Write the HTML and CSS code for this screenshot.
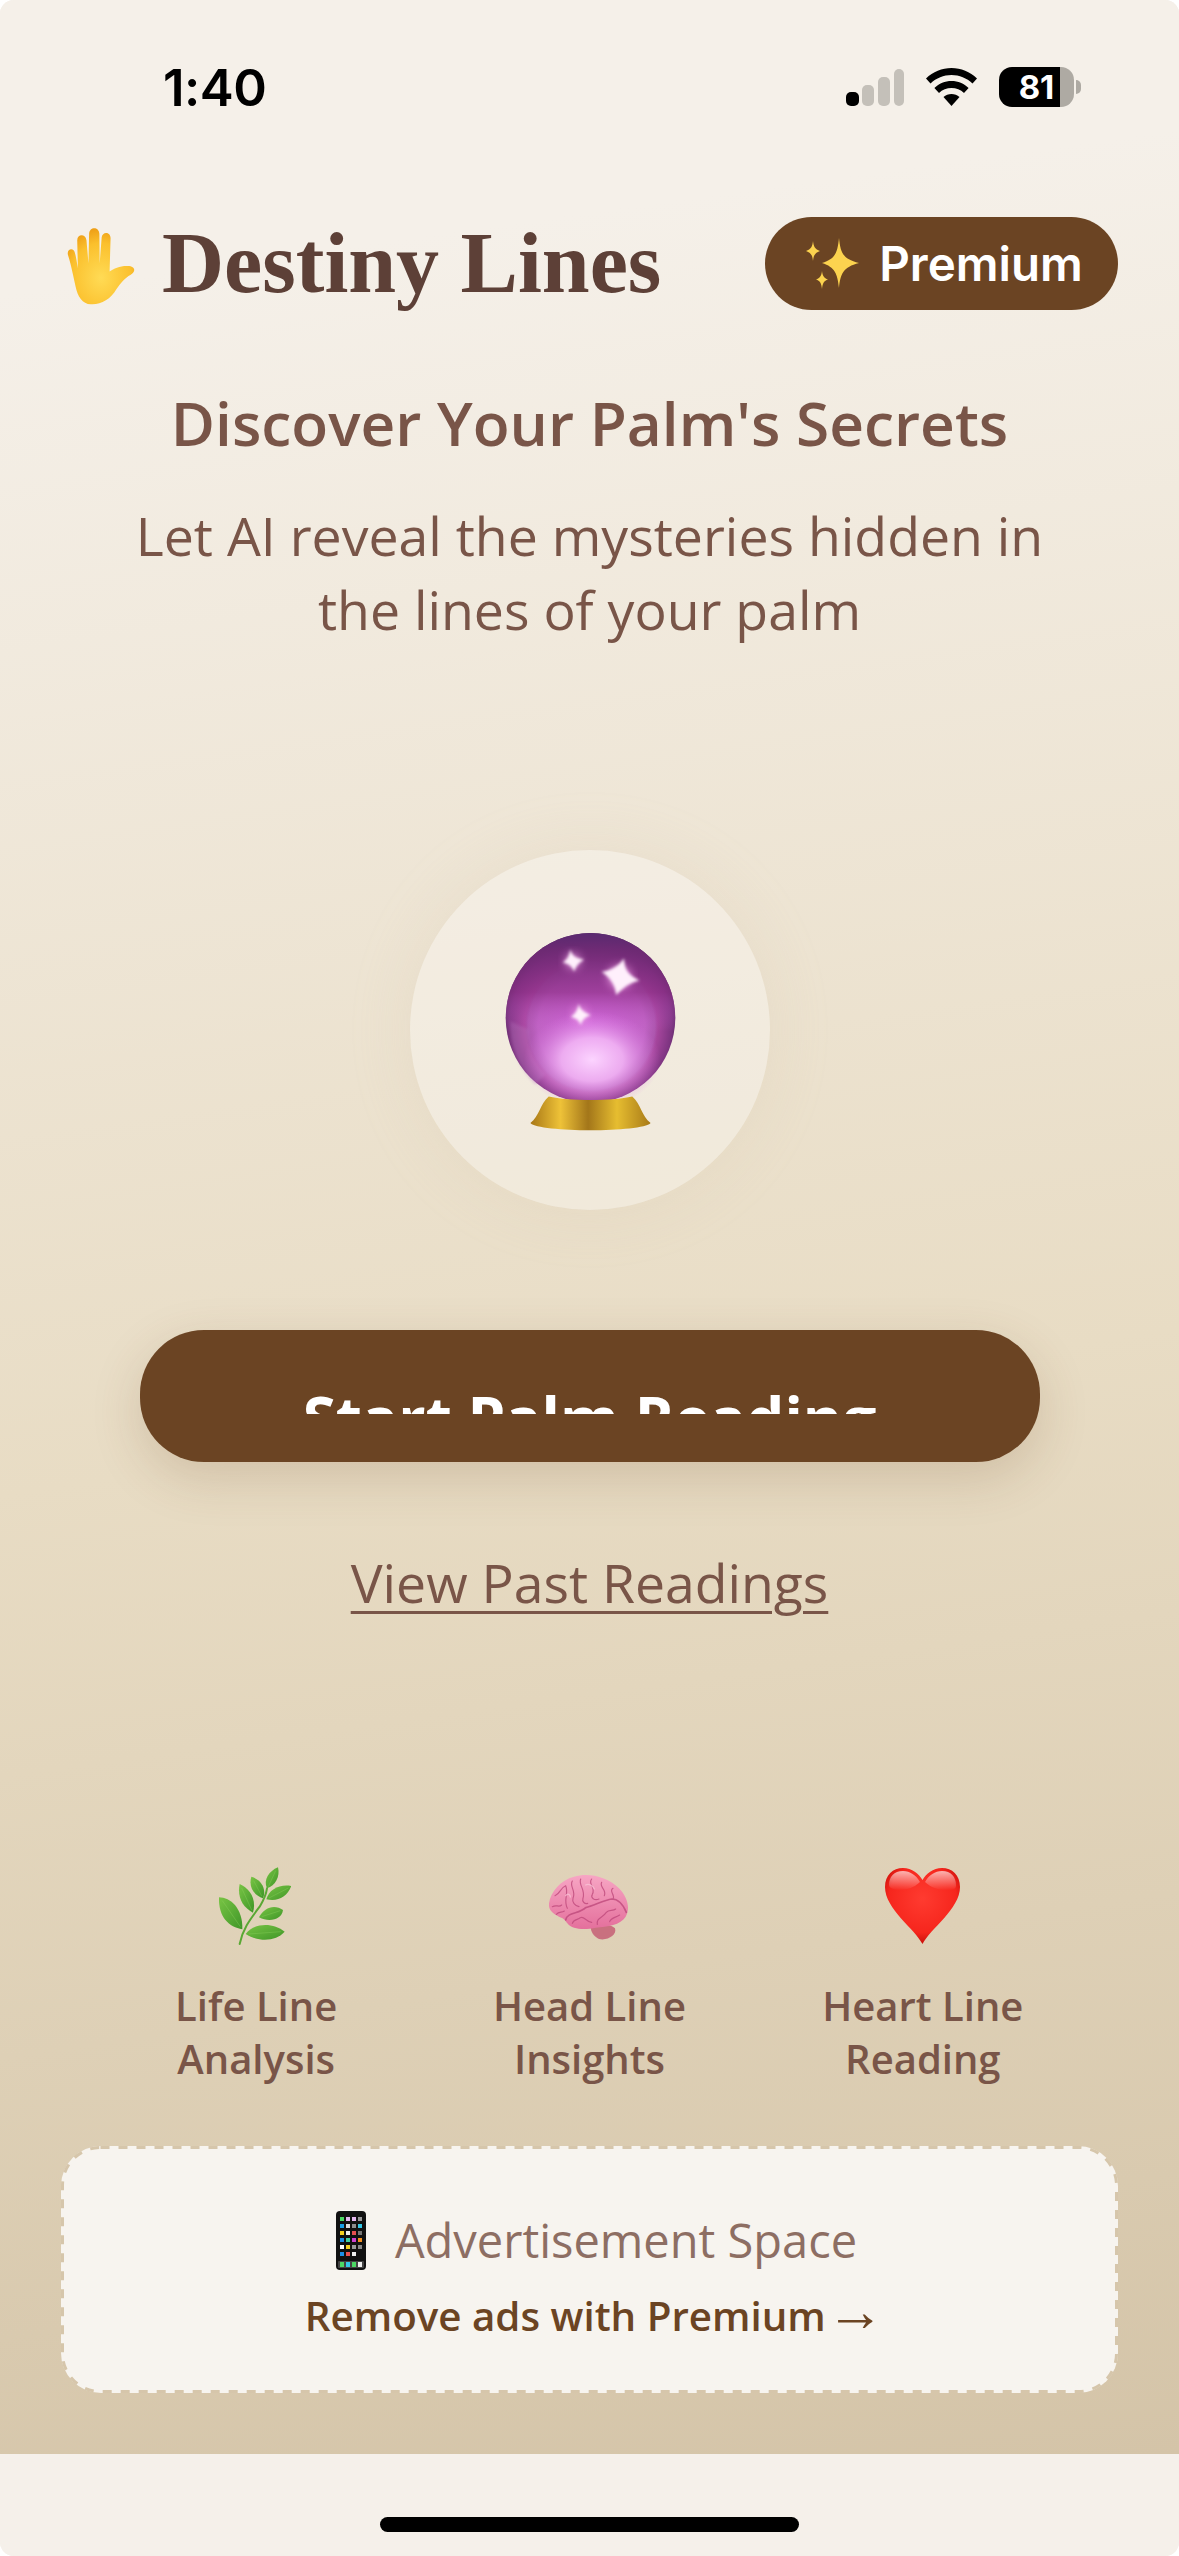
FILE: index.html
```html
<!DOCTYPE html>
<html lang="en">
<head>
<meta charset="utf-8">
<title>Destiny Lines</title>
<link rel="stylesheet" href="styles.css">
</head>
<body>
<div class="screen">
  <div class="status">
    <span class="time">1:40</span>
    <div class="status-icons">
      <svg class="signal" viewBox="0 0 58 37"><rect x="0" y="23" width="13" height="14" rx="5" fill="#000"/><rect x="16" y="16" width="12" height="21" rx="5" fill="#c4c0b9"/><rect x="32" y="8" width="12" height="29" rx="5" fill="#c4c0b9"/><rect x="48" y="0" width="10" height="37" rx="5" fill="#c4c0b9"/></svg>
      <svg class="wifi" viewBox="0 0 51 38"><path d="M25.5 0C35 0 44 3.8 51 10.5L46.5 15.5C40.7 10 33.3 7 25.5 7S10.3 10 4.500 15.500L0 10.500C7 3.800 16 0 25.500 0Z" fill="#000"/><path d="M25.500 13C32 13 38 15.500 42.600 20L38 25C34.700 21.800 30.200 20 25.500 20S16.300 21.800 13 25L8.400 20C13 15.500 19 13 25.500 13Z" fill="#000"/><path d="M25.500 26C28.500 26 31.300 27.100 33.500 29.100L25.500 38L17.500 29.100C19.700 27.100 22.500 26 25.500 26Z" fill="#000"/></svg>
      <div class="battery"><span>81</span></div>
    </div>
  </div>

  <main class="main">
    <header class="top">
      <div class="brand">
        <svg class="hand" viewBox="75 78 212 240">
          <defs><radialGradient id="handFill" cx="50%" cy="65%" r="65%"><stop offset="0" stop-color="#ffdb55"/><stop offset=".7" stop-color="#fbc02d"/><stop offset="1" stop-color="#ee9f16"/></radialGradient></defs>
          <path d="M104 260C98 235 92 200 81 165C77 150 90 143 98 150C103 155 106 175 111 205L109 120C109 100 135 100 137 120L143 190L145 100C146 78 175 78 176 100L177 190L183 112C185 92 211 94 210 115L207 215C220 205 240 197 262 198C285 198 288 215 270 225C255 233 240 250 228 268C210 300 180 316 150 314C125 313 110 290 104 260Z" fill="url(#handFill)"/>
        </svg>
        <h1 class="title">Destiny Lines</h1>
      </div>
      <div class="premium">
        <svg class="sparkles" viewBox="0 0 54 52">
          <path d="M34 0C35.500 15 38 21 54 25C38 29 35.500 36 34 50C32.500 36 30 29 17 25C30 21 32.500 15 34 0Z" fill="#fcd34f"/>
          <path d="M8 3C8.600 9 10 11 15 13C10 15 8.600 17 8 23C7.400 17 6 15 1 13C6 11 7.400 9 8 3Z" fill="#fcd34f"/>
          <path d="M17 33C17.600 38 19 40 23 41.500C19 43 17.600 45 17 51C16.400 45 15 43 11 41.500C15 40 16.400 38 17 33Z" fill="#fcd34f"/>
        </svg>
        <span>Premium</span>
      </div>
    </header>

    <h2 class="headline">Discover Your Palm's Secrets</h2>
    <p class="sub">Let AI reveal the mysteries hidden in<br>the lines of your palm</p>

    <div class="orb-circle">
      <svg class="orb" viewBox="370 330 530 605">
        <defs>
          <radialGradient id="orbBase" cx="50%" cy="55%" r="52%"><stop offset="0" stop-color="#c65ccb"/><stop offset=".75" stop-color="#a9479f"/><stop offset=".92" stop-color="#7c3480"/><stop offset="1" stop-color="#54285f"/></radialGradient>
          <radialGradient id="orbLens" cx="50%" cy="50%" r="50%"><stop offset="0" stop-color="#d267da"/><stop offset=".8" stop-color="#c063c4"/><stop offset=".95" stop-color="#b060b8" stop-opacity=".6"/><stop offset="1" stop-color="#a050a8" stop-opacity="0"/></radialGradient>
          <linearGradient id="orbTop" x1="0" y1="0" x2="0" y2="1"><stop offset="0" stop-color="#5a2a70"/><stop offset=".1" stop-color="#6e2a74" stop-opacity=".95"/><stop offset=".35" stop-color="#8e2f88" stop-opacity=".7"/><stop offset=".58" stop-color="#c85fd0" stop-opacity="0"/></linearGradient>
          <radialGradient id="orbGlow" cx="50%" cy="50%" r="50%"><stop offset="0" stop-color="#fcd4ff"/><stop offset=".45" stop-color="#f4b8f7" stop-opacity=".85"/><stop offset="1" stop-color="#d878e0" stop-opacity="0"/></radialGradient>
          <linearGradient id="gold" x1="0" y1="0" x2="1" y2="0"><stop offset="0" stop-color="#a87716"/><stop offset=".25" stop-color="#eec238"/><stop offset=".48" stop-color="#a3761a"/><stop offset=".72" stop-color="#e6bd30"/><stop offset="1" stop-color="#a87a18"/></linearGradient>
          <filter id="soft"><feGaussianBlur stdDeviation="4"/></filter>
          <filter id="halo"><feGaussianBlur stdDeviation="14"/></filter>
        </defs>
        <circle cx="635" cy="590" r="254" fill="url(#orbBase)"/>
        <circle cx="638" cy="615" r="200" fill="url(#orbLens)"/>
        <path d="M450 625A190 190 0 0 0 500 760L470 790A250 250 0 0 1 395 600Z" fill="#b878c0" opacity=".35" filter="url(#soft)"/>
        <circle cx="635" cy="590" r="254" fill="url(#orbTop)"/>
        <ellipse cx="640" cy="715" rx="205" ry="145" fill="url(#orbGlow)"/>
        <g fill="#f8a8f0" filter="url(#halo)" opacity=".8">
          <circle cx="722" cy="468" r="34"/><circle cx="582" cy="420" r="22"/><circle cx="604" cy="580" r="20"/>
        </g>
        <g fill="#fff0fc" filter="url(#soft)">
          <path d="M735 412C738 445 745 460 782 478C750 486 735 498 712 522C708 490 695 470 668 452C698 448 718 435 735 412Z"/>
          <path d="M574 385C580 405 590 412 616 416C598 426 592 435 586 452C580 435 570 428 552 424C566 416 572 404 574 385Z"/>
          <path d="M600 548C604 565 612 572 636 582C618 588 610 595 606 612C600 596 592 590 576 588C590 578 596 568 600 548Z"/>
        </g>
        <path d="M455 905C482 885 484 848 510 826C570 840 700 840 760 826C786 848 788 885 815 905C790 934 480 934 455 905Z" fill="url(#gold)"/>
      </svg>
    </div>

    <button class="start"><span class="start-clip">Start Palm Reading</span></button>
    <a class="past">View Past Readings</a>

    <section class="features">
      <div class="feature">
        <svg class="ficon ficon-leaf" viewBox="25 21 220 234">
          <defs><linearGradient id="leaf" x1="0" y1="0" x2="1" y2="1"><stop offset="0" stop-color="#78c444"/><stop offset="1" stop-color="#3f9628"/></linearGradient></defs>
          <path d="M90 252C100 205 120 180 150 140C165 115 170 100 172 85" fill="none" stroke="#5aa834" stroke-width="6" stroke-linecap="round"/>
          <g fill="url(#leaf)">
            <path d="M28 112C62 112 100 145 98 208C58 202 26 172 28 112Z"/>
            <path d="M90 72C118 84 142 115 130 158C98 142 82 110 90 72Z"/>
            <path d="M125 50C153 58 172 85 160 115C132 105 116 80 125 50Z"/>
            <path d="M205 22C212 50 197 77 172 85C160 60 178 33 205 22Z"/>
            <path d="M245 78C232 112 205 125 170 118C178 88 210 72 245 78Z"/>
            <path d="M220 150C217 178 180 188 148 172C163 142 195 132 220 150Z"/>
            <path d="M225 215C200 243 150 248 108 222C133 187 192 187 225 215Z"/>
          </g>
          <g fill="none" stroke="#9ad86a" stroke-width="1.500" opacity=".6">
            <path d="M38 122L92 200M96 84L126 150M132 62L156 108M198 32L176 80M236 84L178 114M212 152L156 170M214 215L118 222"/>
          </g>
        </svg>
        <p class="flabel">Life Line<br>Analysis</p>
      </div>
      <div class="feature">
        <svg class="ficon" viewBox="40 6 245 234">
          <defs><linearGradient id="brain" x1="0" y1="0" x2="0" y2="1"><stop offset="0" stop-color="#f7a6c4"/><stop offset="1" stop-color="#e4709c"/></linearGradient></defs>
          <path d="M165 185C180 178 225 175 238 190C245 210 215 228 190 222C175 215 165 200 165 185Z" fill="#c9707f"/>
          <path d="M40 115C45 80 75 45 115 35C160 22 215 35 250 70C275 95 285 130 270 155C255 180 215 185 180 188C150 195 110 195 95 175C88 165 85 160 70 155C50 145 38 135 40 115Z" fill="url(#brain)"/>
          <g fill="none" stroke="#bf4a7c" stroke-width="3.500" stroke-linecap="round" stroke-linejoin="round" opacity=".8">
            <path d="M90 165C95 140 130 148 150 128C175 122 205 105 228 102C250 102 265 125 272 142" stroke-width="5"/>
            <path d="M58 92C75 85 72 70 90 62C100 85 82 105 95 130"/>
            <path d="M110 48C100 65 122 75 112 100C108 112 118 122 130 125"/>
            <path d="M135 42C128 62 150 72 142 100C138 110 148 118 156 115"/>
            <path d="M168 42C155 58 182 66 170 88C164 98 176 108 190 102"/>
            <path d="M198 52C190 68 214 72 206 92"/>
            <path d="M232 70C218 78 240 90 232 102"/>
            <path d="M50 125C62 118 70 128 78 120M62 148C70 138 78 144 86 138"/>
            <path d="M110 175C114 162 128 165 134 158C146 152 150 170 168 172M185 178C182 158 200 160 212 142C220 132 232 140 240 132M222 170C226 158 240 158 252 150"/>
          </g>
          <path d="M150 60C160 55 172 62 176 72M90 92C96 84 104 88 104 96" fill="none" stroke="#fbc8da" stroke-width="4" stroke-linecap="round" opacity=".7"/>
        </svg>
        <p class="flabel">Head Line<br>Insights</p>
      </div>
      <div class="feature">
        <svg class="ficon" viewBox="0 0 75 78">
          <defs>
            <radialGradient id="heart" cx="50%" cy="40%" r="60%"><stop offset="0" stop-color="#ff3b30"/><stop offset=".75" stop-color="#f6261d"/><stop offset="1" stop-color="#c80f0a"/></radialGradient>
            <linearGradient id="heartShine" x1="0" y1="0" x2="0" y2="1"><stop offset="0" stop-color="#fff" stop-opacity=".65"/><stop offset="1" stop-color="#fff" stop-opacity="0"/></linearGradient>
          </defs>
          <path d="M37.500 77C30 62 0 42 0 20C0 8 8 1 18 1C27 1 34 7 37.500 13C41 7 48 1 57 1C67 1 75 8 75 20C75 42 45 62 37.500 77Z" fill="url(#heart)"/>
          <path d="M18 4C9 4 4 10 4 18C4 22 12 24 22 22C28 21 33 17 35 15C31 8 25 4 18 4ZM57 4C50 4 44 8 40 15C46 21 56 24 66 23C71 22 71 20 71 18C71 10 66 4 57 4Z" fill="url(#heartShine)"/>
        </svg>
        <p class="flabel">Heart Line<br>Reading</p>
      </div>
    </section>

    <aside class="ad">
      <svg class="ad-dash" viewBox="0 0 1057 247" fill="none"><rect x="1.500" y="1.500" width="1054" height="244" rx="38" stroke="#d6c6ab" stroke-width="3" stroke-dasharray="9 9"/></svg>
      <div class="ad-line">
        <svg class="phone" viewBox="0 0 30 59">
          <rect width="30" height="59" rx="4" fill="#111"/>
          <g>
            <rect x="4" y="6" width="4" height="4" fill="#4cd964"/><rect x="10" y="6" width="4" height="4" fill="#e5b8f0"/><rect x="16" y="6" width="4" height="4" fill="#e5b8f0"/><rect x="22" y="6" width="4" height="4" fill="#999"/>
            <rect x="4" y="13" width="4" height="4" fill="#18a0e8"/><rect x="10" y="13" width="4" height="4" fill="#ddd"/><rect x="16" y="13" width="4" height="4" fill="#8e8e8e"/><rect x="22" y="13" width="4" height="4" fill="#33c8e8"/>
            <rect x="4" y="20" width="4" height="4" fill="#f5d020"/><rect x="10" y="20" width="4" height="4" fill="#eee"/><rect x="16" y="20" width="4" height="4" fill="#e85050"/><rect x="22" y="20" width="4" height="4" fill="#777"/>
            <rect x="4" y="27" width="4" height="4" fill="#1e90e8"/><rect x="10" y="27" width="4" height="4" fill="#40d0a0"/><rect x="16" y="27" width="4" height="4" fill="#d040d0"/><rect x="22" y="27" width="4" height="4" fill="#f59020"/>
            <rect x="4" y="34" width="4" height="4" fill="#fff"/><rect x="10" y="34" width="4" height="4" fill="#f5d020"/><rect x="16" y="34" width="4" height="4" fill="#999"/><rect x="22" y="34" width="4" height="4" fill="#888"/>
            <rect x="4" y="41" width="4" height="4" fill="#1e90e8"/><rect x="10" y="41" width="4" height="4" fill="#e85050"/><rect x="16" y="41" width="4" height="4" fill="#eee"/>
            <rect x="2" y="50" width="26" height="7" rx="1" fill="#444"/>
            <rect x="4" y="51" width="4" height="5" fill="#4cd964"/><rect x="10" y="51" width="4" height="5" fill="#33c8e8"/><rect x="16" y="51" width="4" height="5" fill="#4cd964"/><rect x="22" y="51" width="4" height="5" fill="#eee"/>
          </g>
        </svg>
        <span class="ad-text">Advertisement Space</span>
      </div>
      <div class="ad-remove">Remove ads with Premium <span class="arrow">→</span></div>
    </aside>
  </main>

  <div class="home"><div class="home-bar"></div></div>
</div>
</body>
</html>
```
FILE: styles.css
```css
* { box-sizing: border-box; }
html, body { margin: 0; padding: 0; background: #fff; }
body { width: 1179px; height: 2556px; overflow: hidden; font-family: "Open Sans", sans-serif; }

.screen {
  width: 1179px;
  height: 2556px;
  display: flex;
  flex-direction: column;
  background: #f5f0ea;
  border-radius: 14px;
  overflow: hidden;
}

/* status bar */
.status {
  height: 120px;
  flex: none;
  display: flex;
  justify-content: space-between;
  align-items: flex-start;
  padding: 60px 105px 0 163px;
  background: #f5f0e9;
}
.time { font: 600 51px/56px Inter, sans-serif; color: #000; letter-spacing: -0.5px; }
.status-icons { display: flex; align-items: center; gap: 22px; margin-top: 7px; }
.signal { width: 58px; height: 37px; display: block; }
.wifi { width: 51px; height: 38px; display: block; }
.battery {
  position: relative;
  width: 75px;
  height: 40px;
  border-radius: 13px;
  background: linear-gradient(90deg, #000 0 81%, #aeaaa3 81% 100%);
  display: flex;
  align-items: center;
  justify-content: center;
  color: #fff;
  font: 700 33px/40px Inter, sans-serif;
}
.battery::after {
  content: "";
  position: absolute;
  right: -7px;
  top: 13px;
  width: 5px;
  height: 14px;
  border-radius: 0 6px 6px 0;
  background: #aeaaa3;
}

/* main */
.main {
  flex: 1;
  display: flex;
  flex-direction: column;
  align-items: center;
  padding: 97px 61px 60px;
  background: linear-gradient(172deg, #f5f0e9 7%, #e8dcc4 55%, #d4c4a8 100%);
}
.top { width: 100%; display: flex; justify-content: space-between; align-items: center; height: 93px; }
.brand { display: flex; align-items: center; gap: 26px; padding-left: 5px; }
.hand { width: 70px; height: 80px; display: block; margin-top: 4px; }
.title { margin: 0; font: 700 86px/93px "Liberation Serif", serif; color: #5d4037; }
.premium {
  width: 353px;
  height: 93px;
  border-radius: 47px;
  background: #6b4423;
  display: flex;
  align-items: center;
  justify-content: center;
  gap: 20px;
  padding-left: 5px;
  color: #fff;
  font: 600 47.500px/93px Inter, sans-serif;
}
.sparkles { width: 54px; height: 52px; display: block; }

.headline { margin: 73px 0 0; font: 600 60.400px/80px "Open Sans", sans-serif; color: #795548; text-align: center; }
.sub { margin: 36px 0 0; font: 400 53.600px/74px "Open Sans", sans-serif; color: #795548; text-align: center; }

.orb-circle {
  margin-top: 203px;
  width: 360px;
  height: 360px;
  flex: none;
  border-radius: 50%;
  background: rgba(255, 255, 255, .32);
  box-shadow: 0 0 60px rgba(212, 196, 168, .22);
  display: flex;
  align-items: center;
  justify-content: center;
}
.orb { width: 177px; height: 202px; display: block; margin: 4px 0 0 2px; }

.start {
  margin-top: 120px;
  width: 900px;
  height: 132px;
  flex: none;
  border: 0;
  border-radius: 64px;
  background: #6b4423;
  box-shadow: 0 16px 50px rgba(107, 68, 35, .18);
  display: block;
  padding: 48px 0 48px;
  text-align: center;
}
.start-clip {
  display: block;
  height: 36px;
  overflow: hidden;
  color: #fff;
  font: 700 60.200px/80px "Open Sans", sans-serif;
}

.past {
  margin-top: 84px;
  font: 400 53.500px/74px "Open Sans", sans-serif;
  color: #795548;
  text-decoration: underline;
  text-decoration-thickness: 3px;
  text-underline-offset: 8px;
}

.features { margin-top: 247px; width: 1000px; flex: none; display: grid; grid-template-columns: repeat(3, 1fr); }
.feature { display: flex; flex-direction: column; align-items: center; gap: 34px; }
.ficon { height: 78px; width: auto; display: block; }
.ficon-leaf { margin-right: 3px; }
.flabel { margin: 0; font: 600 40px/53px "Open Sans", sans-serif; color: #795548; text-align: center; }

.ad {
  position: relative;
  margin-top: 61px;
  width: 100%;
  height: 247px;
  flex: none;
  border-radius: 40px;
  background: #f7f4ef;
  display: flex;
  flex-direction: column;
  align-items: center;
  justify-content: center;
  gap: 18px;
  padding-top: 16px;
}
.ad-dash { position: absolute; left: 0; top: 0; width: 100%; height: 100%; }
.ad-line { display: flex; align-items: center; gap: 29px; height: 59px; margin-left: 14px; }
.phone { width: 30px; height: 59px; display: block; }
.ad-text { font: 400 47px/59px "Open Sans", sans-serif; color: #8d6e63; }
.ad-remove { font: 600 40.300px/56px "Open Sans", sans-serif; color: #6b4423; padding-left: 10px; }
.arrow { font: 400 58px/40px "Liberation Serif", serif; margin-left: -10px; }

.home { height: 102px; flex: none; display: flex; justify-content: center; padding-top: 63px; background: #f5f0ea; }
.home-bar { width: 419px; height: 15px; border-radius: 8px; background: #000; }
```
